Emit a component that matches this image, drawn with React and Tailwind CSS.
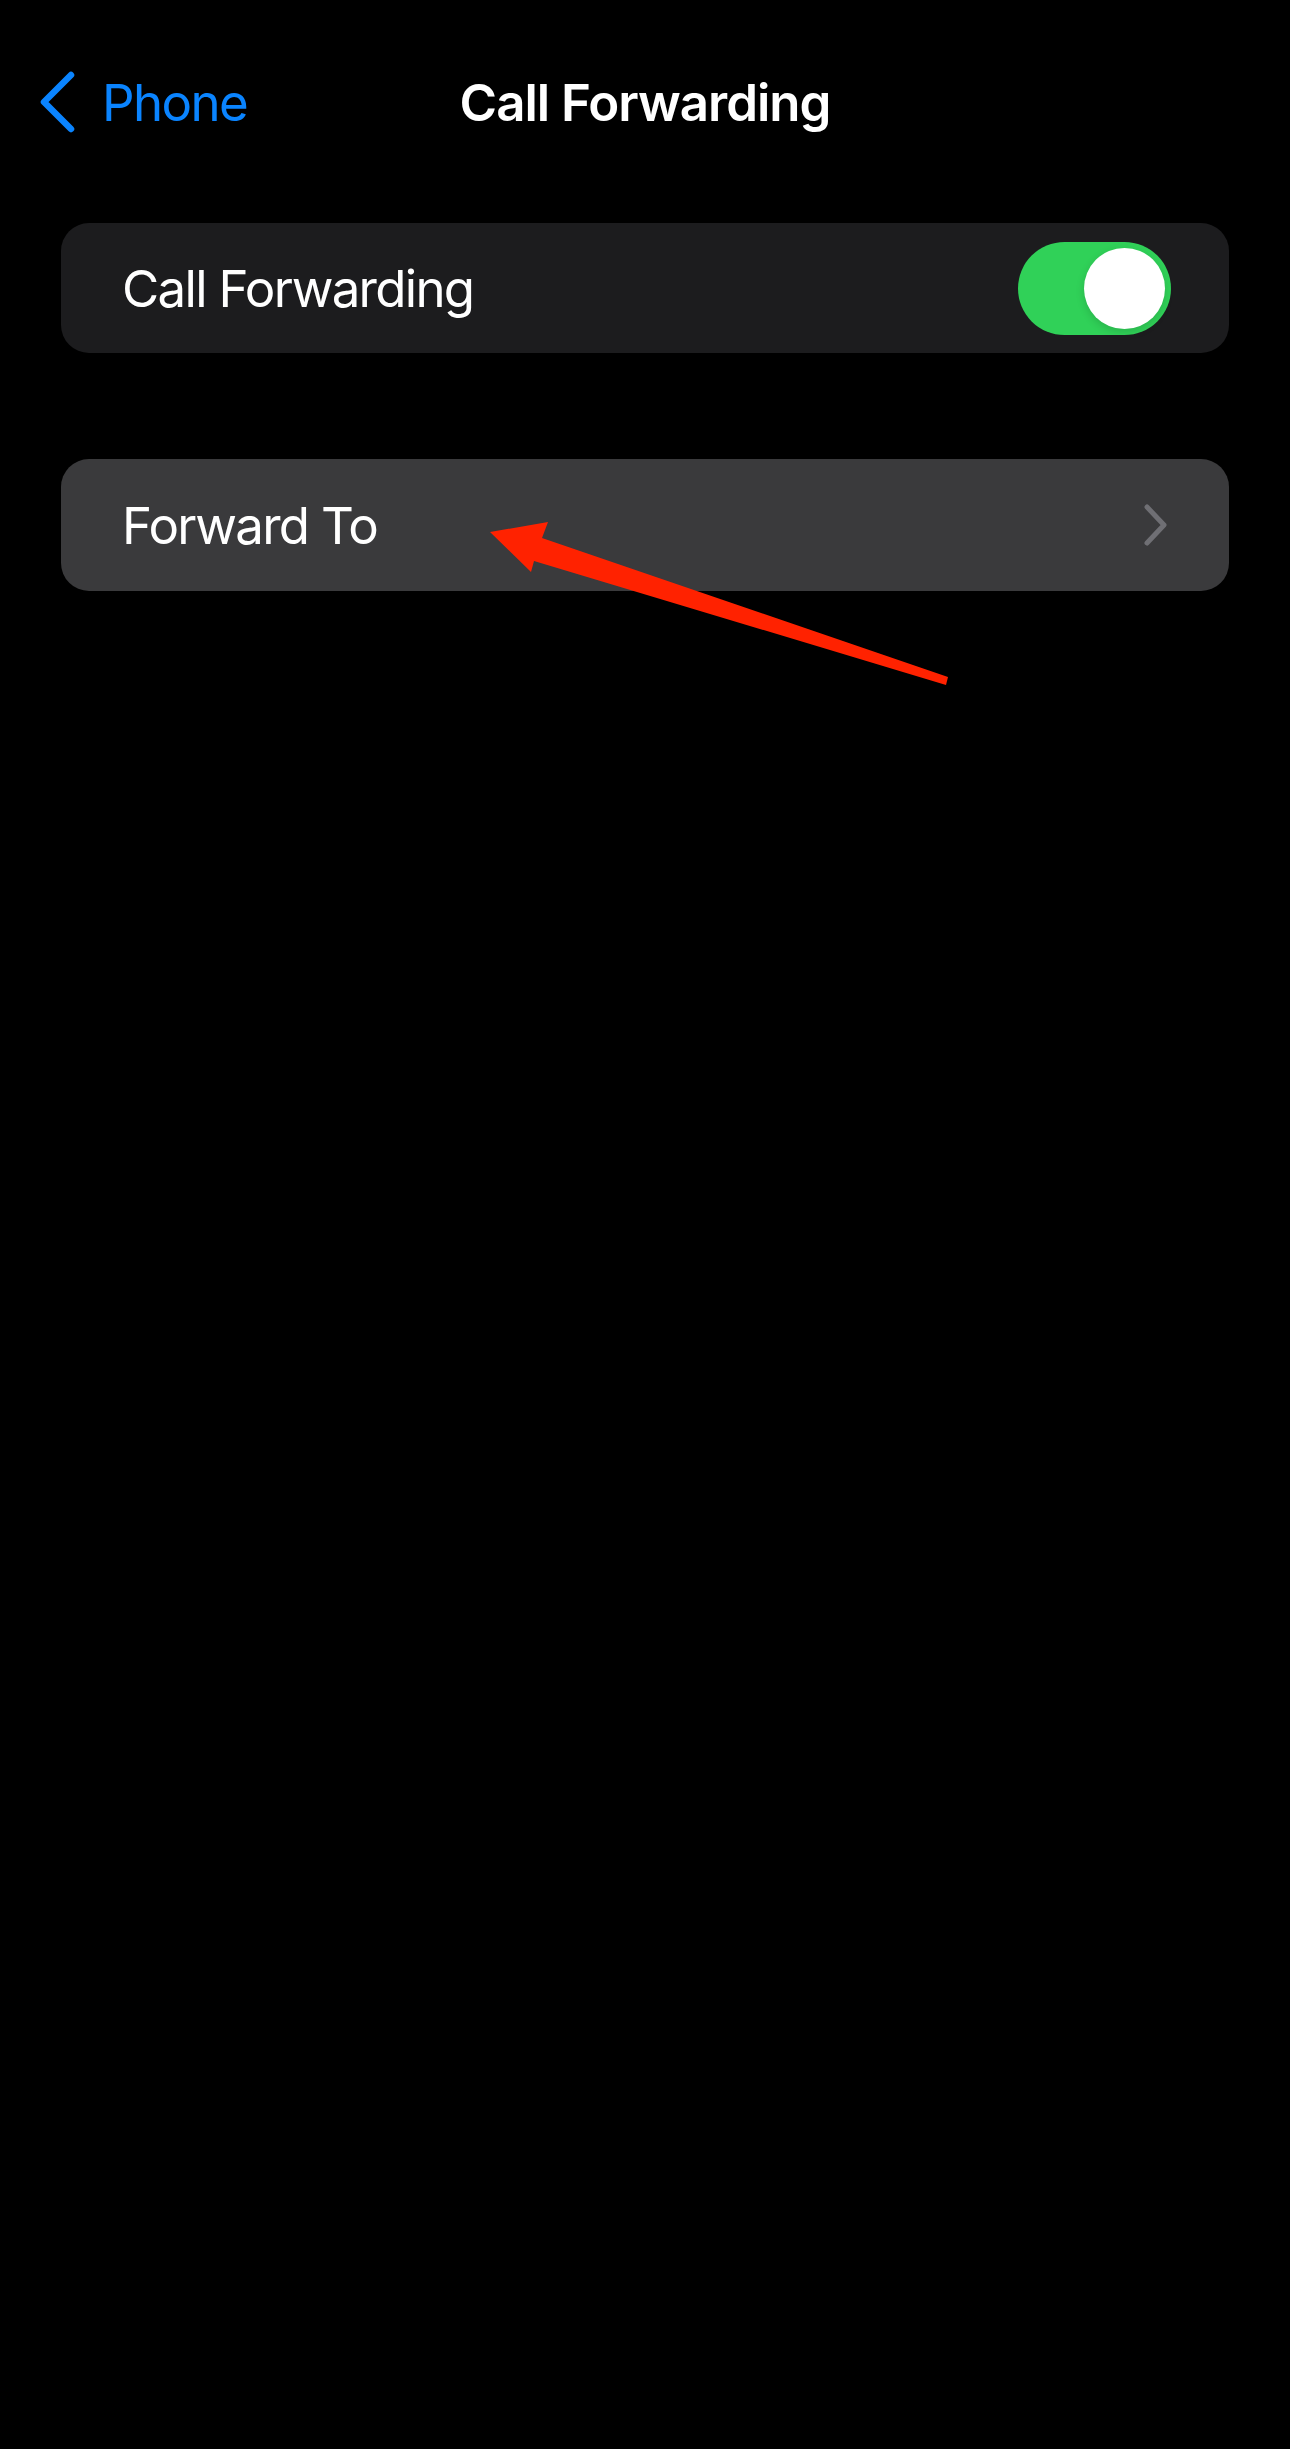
import React, { useState } from 'react';

const Toggle = ({ on, onChange }) => (
  <button
    onClick={() => onChange(!on)}
    className={`flex h-[93px] w-[153px] shrink-0 items-center rounded-full p-[6px] ${
      on ? 'justify-end bg-[#30d158]' : 'justify-start bg-[#39393d]'
    }`}
  >
    <span className="block h-[81px] w-[81px] rounded-full bg-white shadow-[0_3px_8px_rgba(0,0,0,0.15)]" />
  </button>
);

const App = () => {
  const [forwarding, setForwarding] = useState(true);

  return (
    <div className="relative min-h-[2449px] bg-black font-['Inter','Noto_Sans',sans-serif] text-white">
      {/* Nav bar */}
      <nav className="grid h-[204px] grid-cols-[1fr_auto_1fr] items-center">
        <div className="flex items-center pl-[38px]">
          <svg width="40" height="62" viewBox="0 0 40 62" className="mr-[24px]">
            <polyline
              points="33,4 6,31 33,58"
              fill="none"
              stroke="#0a84ff"
              strokeWidth="6.5"
              strokeLinecap="round"
              strokeLinejoin="round"
            />
          </svg>
          <span className="text-[51px] leading-none tracking-[-1.6px] text-[#0a84ff]">Phone</span>
        </div>
        <h1 className="text-[51px] font-semibold leading-none tracking-[-1px]">Call Forwarding</h1>
        <div />
      </nav>

      <div className="flex flex-col gap-[106px] px-[61px] pt-[19px]">
        {/* Toggle row */}
        <div className="flex h-[130px] items-center justify-between rounded-[28px] bg-[#1c1c1e] pl-[61px] pr-[58px]">
          <span className="text-[51px] leading-none tracking-[-1.7px]">Call Forwarding</span>
          <Toggle on={forwarding} onChange={setForwarding} />
        </div>

        {/* Forward To row */}
        <div className="flex h-[132px] items-center justify-between rounded-[28px] bg-[#3a3a3c] pl-[61px] pr-[60px]">
          <span className="text-[51px] leading-none tracking-[-1.7px]">Forward To</span>
          <svg width="26" height="42" viewBox="0 0 26 42">
            <polyline
              points="4,3 21,21 4,39"
              fill="none"
              stroke="#6f6f74"
              strokeWidth="5"
              strokeLinecap="round"
              strokeLinejoin="round"
            />
          </svg>
        </div>
      </div>

      {/* Red annotation arrow */}
      <svg
        className="pointer-events-none absolute left-0 top-0"
        width="1290"
        height="700"
        viewBox="0 0 1290 700"
      >
        <polygon
          points="490,532 548,522 542,538 948,677 946,685 534,561 531,572"
          fill="#ff2200"
        />
      </svg>
    </div>
  );
};

export default App;
